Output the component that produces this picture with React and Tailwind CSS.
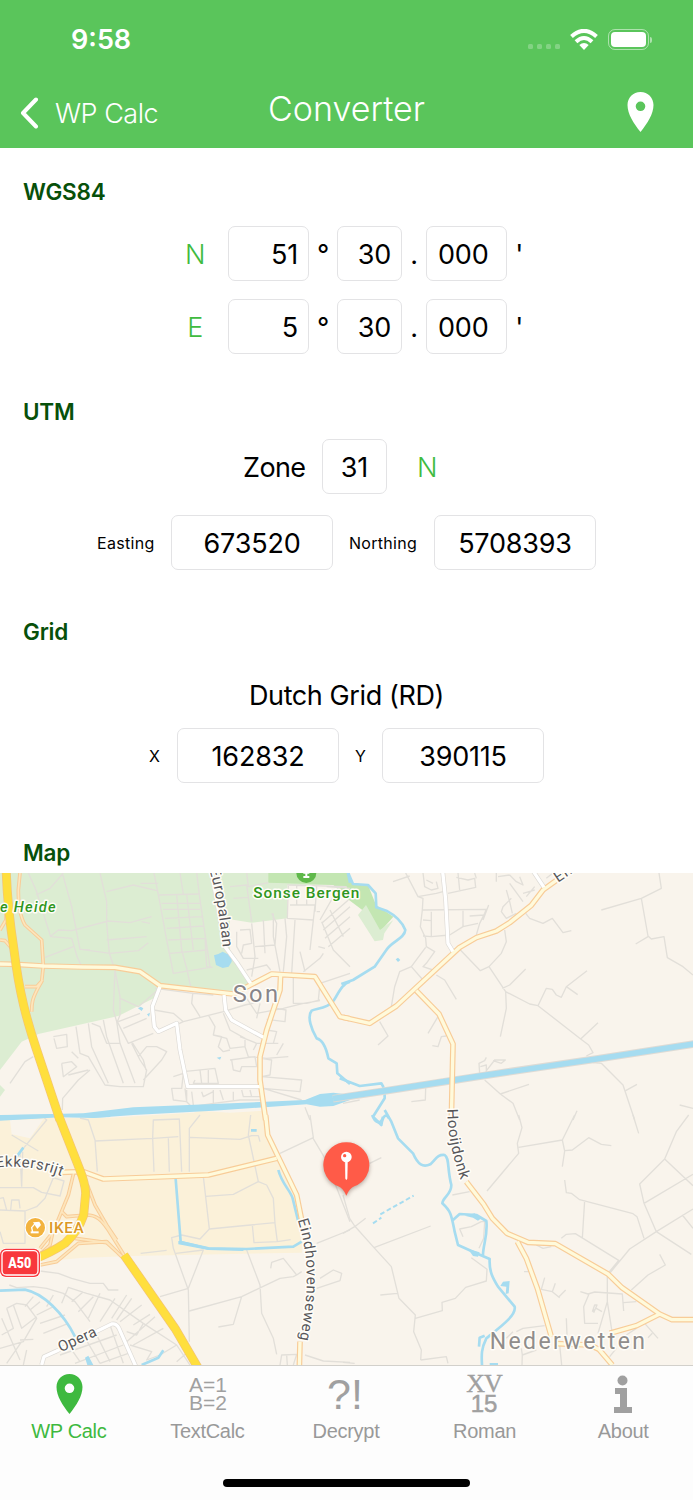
const SHEETS = {
  nw: 'translate(0 0)',
  ne: 'translate(1029 0)',
  sw: 'translate(0 735)',
  se: 'translate(1029 735)',
}

// Map geometry, split in four sheets, three units to the pixel
const STREETS = {
  nw: `M85 9L108 60L152 200L215 205L232 262L243 285M108 75L150 55L190 9M187 9L215 110L240 238L270 240M150 200L175 180L215 182L325 153L390 158L455 140M243 238L330 250L415 242L445 218M135 262L220 230M300 9L320 95L320 160L328 250L345 300L360 380L360 435L352 455
  M320 65L400 45L470 62M320 210L440 200M422 40L475 40M462 9L480 100L498 200L520 310L630 292L600 90L590 9M475 75L600 72M485 100L600 100M490 118L600 118M495 145L608 140M500 175L612 168M505 210L615 205M510 250L620 240M530 75L545 240L560 295L572 350M560 75L580 240M425 155L450 160M540 9L550 72M615 205L620 290L638 292M690 50L740 45L755 155M700 85L745 82M740 9L745 50L805 38
  M862 45L1040 50M865 45L862 145L940 150L945 105L870 105M890 45L890 105M920 45L920 105M950 50L945 125M950 125L960 125M980 50L1050 55M960 150L1000 80L1040 52M965 160L1045 90M970 180L1050 110M975 205L1050 140M985 230L1050 175M965 155L1000 240L1050 290M990 120L1030 200M955 230L975 235M910 305L960 265L970 250M820 130L820 200L840 305M855 145L860 200L850 305M885 150L875 310M940 150L930 240M900 245L915 305M755 160L765 260L755 320M790 150L795 250M720 180L750 178L755 220L730 225L725 250M710 185L710 230L730 265L775 265M765 230L825 225L830 160L815 130M740 300L800 285L812 300M955 390L960 340L1050 310M880 315L880 400L920 400L960 390M730 370L770 430L850 415L910 400L960 392M770 445L780 400M830 415L858 420L855 455L800 448
  M465 355L580 370L640 375M578 372L575 400L600 440M462 420L520 430L550 455L670 425L735 405L780 395M360 385L415 410L485 350M485 485L550 455M352 455L385 520L460 490M355 455L420 430M370 475L440 445M395 515L430 570L438 600M350 455L340 420L345 300M415 560L440 530L470 530L500 545L485 570L430 630
  M160 500L200 493L202 530L170 535L162 505M228 470L240 550L265 560L315 645L360 650L430 650L440 600L420 570L395 520M265 460L275 530L325 640M275 460L300 470L320 520L360 520M310 450L320 500L370 640M350 455L360 520L405 640M215 545L235 565M185 580L215 575L230 590L190 620L185 580M205 615L265 600M187 720L188 685L235 630L270 600M30 640L75 575L100 560
  M625 435L645 470L640 495L680 505L690 535L735 530L745 560L800 565L865 560M640 495L665 500L655 530L670 545L690 540M690 570L765 560L770 590L725 590L720 605L700 600L695 570M670 430L690 480L735 505L735 530M720 500L770 520L835 520M770 520L760 540M800 480L830 485L820 520M850 520L830 555M785 565L815 570L810 615L785 620M785 620L905 630L900 665L790 655M790 655L905 690M520 620L550 610L545 655L515 655L520 690L560 695L555 655M550 605L645 595L655 640L580 640L585 630M600 600L605 640M625 600L625 640M560 660L560 695L575 710L640 700L720 690L780 690M575 665L580 705M605 665L610 680L640 665M640 660L640 700M660 660L670 690M700 665L700 690M725 660L730 680L780 680M750 660L755 680M905 700L1050 680M915 712L930 750`,
  ne: `M150 35L200 18M188 9L225 80L240 85L238 120L232 170L248 205L250 230L275 245L250 280L240 290L270 300M240 120L430 118L425 130L410 160L400 195M225 80L280 70L300 65M240 9L245 50L265 60L285 55L280 35M250 30L270 40M315 70L398 52L395 25L375 30L340 22M345 9L350 60M395 9L400 25M265 125L265 200M240 150L265 152M240 198L265 200L320 195L360 170L405 160M360 120L360 170M380 138L425 135M437 105L420 150M248 232L205 290L170 305L155 350L145 410M205 290L240 330M280 315L305 330L340 388M110 455L135 498L105 525M285 440L255 490M268 527L285 530L295 500L310 498
  M460 9L460 35M465 20L500 15M500 15L520 35L540 45L530 20M500 40L540 95M540 70L575 60M490 60L500 95L508 130M505 85L480 110L475 125L490 145L520 130M610 25L630 9M585 20L600 50M575 50L550 80M548 130L560 145L600 160L628 145L660 188L685 182M485 180L490 215L475 250L438 290L412 302L350 238M438 290L488 365L490 415L472 500M478 355L500 345L548 297M488 365L560 402L585 407L610 355L628 358L640 375L655 382L670 350L732 302M670 350L704 374M585 407L713 507L737 525L750 548L730 558M713 507L765 458
  M775 120L895 85L955 55L948 9M895 85L915 198L925 207L963 200L973 263L1020 290L1050 315M878 222L915 200M410 610L408 580L425 572L430 562M428 605L455 570L487 570L475 580L450 572M412 590L430 585L430 605M750 578L775 580L840 645L875 750M848 662L882 643M425 630L472 672L510 700L530 750M472 672L558 643M248 655L247 690L205 695M0 700L50 690M690 750L702 722M1010 705L1050 715`,
  sw: `M35 60L115 108M70 100L140 15L125 0M60 115L65 215M0 218L100 218L125 232L180 243L192 198L160 188L135 250L110 275L75 288L0 285M0 250L10 248L20 285M32 285L35 255L57 255L60 280M75 288L75 385L10 385L0 350M65 215L68 110
  M240 9L265 15L285 75L292 170M285 78L458 70L460 15L538 12L545 170M458 70L462 170M505 70L508 170M460 70L535 65M568 170L568 40L600 0M570 67L720 73L755 62L775 62L780 80M752 0L745 60L775 200L800 210L820 250L825 325L832 380L872 374M775 200L700 238L618 244M610 185L628 342L600 372L545 360L515 368L520 400L565 525L568 680M628 342L720 333L825 323M757 330L762 383L832 380M422 415L500 406M528 415L610 405L565 520L480 545M740 405L780 510L785 595L820 670L830 718M568 588L725 545L840 490L880 485L890 480L850 430L815 442L812 460M725 545L700 628L655 636M840 115L940 68L930 0M938 68L975 130L1050 320M950 385L1050 345M890 480L905 470M950 520L1020 497L1025 475L1000 465L960 490
  M120 468L175 475L215 490L270 505L310 505L325 525L355 525M28 510L50 518L100 515L140 520L190 535L225 560L270 620M185 565L205 517L260 535L330 555L430 625L530 690L570 750M20 580L50 565L80 570L110 610L70 680L0 700M20 580L40 640L5 660M40 570L65 640L110 605M5 610L60 735M100 545L75 575M120 560L90 585M160 575L110 600M195 600L120 625M205 625L130 655M160 540L140 575M250 530L215 560M280 545L235 590M300 535L265 610M345 550L300 620M380 540L335 610M395 550L350 615M425 570L360 620M450 598L400 630M465 605L380 680M490 640L400 690M430 625L410 660L380 650M530 690L480 720L440 735L455 710L390 690M570 705L530 740M205 690L240 740M250 660L300 745M280 640L330 740M180 720L350 660M225 745L370 690M300 745L385 715M330 630L370 745M65 680L20 745M60 675L100 673M80 705L70 750M840 750L845 720L890 718L880 750M860 720L862 750M915 720L970 738L1050 742`,
  se: `M80 145L115 128M0 240L20 310L35 333L93 398L145 455L168 550L217 600L212 650L235 705L233 735M0 355L35 335L68 310M93 398L263 333M112 540L163 535M217 610L298 587L297 562L337 550L368 517L430 498L432 463L385 428M233 735L310 725L315 745M0 742L35 745M328 240L380 230M360 365L350 342L385 335L415 320L425 320L422 370L408 400
  M527 0L537 38L523 85L527 115L432 228M527 97L658 75L665 108L658 155M658 75L695 0M665 107L688 105L737 68L775 88L805 92M870 0L887 55M665 195L670 233L685 235L710 254L870 296L882 305L903 370M725 256L718 370M655 370L670 358L697 356L827 436L795 475M580 390L600 400L625 395M800 475L860 402L940 350L1050 282M940 350L903 265L890 207L965 132L1000 50L1037 0M965 132L1050 212M903 265L1050 178M1018 300L1050 340M940 350L1045 418M950 418L967 450L915 480L865 525M543 470L560 470M605 488L595 523L628 530L650 548M637 505L628 530M668 525L648 545M712 530L735 537L755 531L838 537L842 588M738 537L722 575L725 625L765 625M793 475L793 560L765 655M793 560L807 650M842 563L880 560M748 590L755 570L762 570L752 593M748 590L760 580L777 590M670 610L672 660M520 650L540 640L605 632M490 670L510 650M535 700L538 720L580 705M538 718L537 750M650 690L656 750M905 625L945 670M800 725L820 700M850 660L880 640M915 668L928 655`,
}

const WATER = {
  nw: 'M642 256L655 252L668 245L682 252L695 250L695 275L686 290L668 294L648 285ZM0 736L250 730L400 712L780 696L915 690L960 672L1000 668L1050 674L1050 690L1000 708L960 710L920 703L640 722L400 735L280 744L180 742L0 750ZM414 415L422 410L430 415L425 423ZM441 433L450 428L447 440ZM650 563L664 560L660 569Z',
  ne: 'M158 268L165 263L172 270L165 276Z',
  sw: 'M0 0L280 -4L335 -2L330 6L280 8L210 2L130 10L0 17ZM535 378L545 378L630 398L740 400L728 408L625 405L535 388ZM753 42L770 42L770 50L753 50ZM255 728L265 722L280 750L262 750Z',
  se: 'M365 302L395 295L415 310L405 317L390 308ZM375 402L410 412L405 425L390 423ZM472 513L480 500L500 498L497 535L488 537L490 515Z',
}

const HIGHWAY = {
  nw: 'M18 -20C20 80 28 150 42 240C58 370 80 450 110 540L180 750',
  sw: 'M175 0L238 160Q256 205 257 235L251 300Q235 348 195 385Q150 415 100 433M372 420L525 640L595 760',
}

const MAIN_ROADS = {
  nw: 'M0 282L48 283L130 288L245 291L345 292L420 305L480 347L700 372L815 312L945 320L1020 440L1050 446M842 312L840 360L800 480L780 560L780 630L797 750',
  ne: 'M0 442L80 460L160 408L350 232L400 203L460 183L500 158L565 106L600 60L690 -5M220 362L288 432L330 522L325 750',
  sw: 'M180 172L250 170L310 192L625 180L830 130M797 0L803 60L890 240L910 340M900 680L898 760',
  se: 'M370 200L422 268L448 310L492 355L555 382L637 386L795 477L837 518L950 597L987 614L1050 614M523 380L550 430L583 520L625 665M950 597L880 632L800 655M640 686L740 690L768 703L808 750',
}

const RAMPS = {
  nw: 'M60 9L55 60C55 110 60 140 75 165L125 210L130 288L125 335C95 385 95 400 95 425M0 180L18 150L18 100M0 210L15 212L35 235M75 350L110 350L128 330',
  sw: 'M222 170L205 240L160 350L120 400M185 290L200 305L260 300C290 300 305 315 325 345L372 420M262 210L285 270L320 330L350 375M225 370L320 383L372 430M120 450L170 440L235 385L320 380L365 425M160 345L150 390L118 420',
}

const WHITE_ROADS = {
  nw: 'M632 -10L675 230L712 280L755 345M480 350L457 410L463 470L475 485L530 460L540 540L563 650L780 650M672 375L677 420L695 450L790 502',
  ne: 'M298 -5L308 90L315 220L330 245M565 -5L603 52',
  sw: 'M125 750L132 725L170 708L335 627C345 625 352 630 357 640L410 760',
}

const CANAL = 'M-30 686L130 662L420 617L760 567L1070 519'

const STREAMS = {
  nw: 'M1050 335C1030 340 1020 360 1005 385C990 415 950 415 935 422C920 440 935 480 950 505C970 510 980 540 985 565L1010 580L1012 610L1050 642M1042 0L1050 38',
  ne: 'M-5 342L30 330L95 290L130 240C145 215 185 205 187 180C175 150 145 130 130 122L100 112L98 70L75 45L30 42L14 5M-10 625L50 648L115 640C125 655 125 665 125 685L90 740L115 765C120 735 130 730 138 745',
  sw: 'M527 192L542 380M545 382L625 400L740 402L880 395L905 380M835 165C845 205 870 225 878 250L895 320M70 98L50 125M0 527L75 524C130 535 190 595 225 665M425 750L475 728L490 706',
  se: 'M88 0C95 25 115 30 120 5M125 -15L145 20L165 70L210 115C225 150 240 158 262 148C280 130 285 118 305 120C320 130 312 160 325 210C325 240 300 245 298 265C325 290 325 300 335 350L345 390L400 415L440 432C438 470 450 490 465 515L515 575C520 600 480 630 430 670C415 700 415 720 417 750M330 315L350 297L400 300L430 318C435 360 420 390 420 420M425 662L410 668L408 695M440 748L465 748',
}

const WAYPOINT_ROWS = [
  { direction: 'N', degrees: '51' },
  { direction: 'E', degrees: '5' },
]

function Layer({ paths, stroke, width }) {
  return (
    <g fill="none" stroke={stroke} strokeWidth={width} strokeLinejoin="round">
      {Object.entries(paths).map(([sheet, d]) => (
        <path key={sheet} d={d} transform={SHEETS[sheet]} />
      ))}
    </g>
  )
}

function PathLabel({ id, d, sheet, size = 45, length, children }) {
  return (
    <g transform={SHEETS[sheet]}>
      <path id={id} d={d} fill="none" />
      <text fontSize={size} textLength={length} fill="#57575a" stroke="#fffdf8" strokeWidth="9" strokeLinejoin="round" paintOrder="stroke">
        <textPath href={`#${id}`} textLength={length}>{children}</textPath>
      </text>
    </g>
  )
}

function PlaceLabel({ x, y, size, color, children, ...rest }) {
  return (
    <text x={x} y={y} fontSize={size} fill={color} stroke="#fffdf8" strokeWidth="9" strokeLinejoin="round" paintOrder="stroke" {...rest}>
      {children}
    </text>
  )
}

function MapView() {
  return (
    <svg viewBox="0 9 2079 1476" className="block h-[492px] w-full font-['Roboto',sans-serif]">
      <rect y="9" width="2079" height="1476" fill="#f9f4ec" />
      <path d="M0 9H1050V45L862 45V145L755 158L690 148L690 240L755 345L700 370L480 347L470 380L355 438L115 492L65 515L0 600Z" fill="#dcedd2" />
      <path d="M0 645L15 660L0 680Z" fill="#dcedd2" />
      <path d="M805 9H1045L1060 40L1104 45L1128 105L1180 140L1140 185L1100 130L1040 85L1000 45L862 40L805 38Z" fill="#c3e6b2" />
      <path d="M1074 135L1098 105L1140 180L1180 150L1153 190L1149 210L1124 214Z" fill="#dcedd2" />
      <path d="M0 745L330 743L580 728L600 723L690 728L797 722L803 795L890 975L910 1120L905 1148L400 1158L250 1163L120 1175L0 1165Z" fill="#fbf1d9" />
      <path d="M30 750L130 748L90 805L35 793Z" fill="#f9f4ec" />
      <Layer paths={STREETS} stroke="#e2dfd9" width="4" />
      {Object.entries(WATER).map(([sheet, d]) => (
        <path key={sheet} d={d} transform={SHEETS[sheet]} fill="#a6dcf0" />
      ))}
      <Layer paths={STREAMS} stroke="#a6dcf0" width="8" />
      <path d={CANAL} transform={SHEETS.ne} fill="none" stroke="#dedbd5" strokeWidth="23" />
      <path d={CANAL} transform={SHEETS.ne} fill="none" stroke="#a6dcf0" strokeWidth="17" />
      <path d="M90 325L115 308M112 298L212 242" transform={SHEETS.se} fill="none" stroke="#a6dcf0" strokeWidth="6" strokeDasharray="14 8" />
      <Layer paths={WHITE_ROADS} stroke="#dedbd6" width="14" />
      <Layer paths={RAMPS} stroke="#f8cc98" width="11" />
      <Layer paths={MAIN_ROADS} stroke="#f8cc98" width="17" />
      <Layer paths={WHITE_ROADS} stroke="#ffffff" width="10" />
      <Layer paths={RAMPS} stroke="#fde6bd" width="5" />
      <Layer paths={MAIN_ROADS} stroke="#fffadb" width="10" />
      <Layer paths={HIGHWAY} stroke="#f3c478" width="27" />
      <Layer paths={HIGHWAY} stroke="#ffdf3d" width="23" />

      <PathLabel id="europalaan" sheet="nw" d="M628 -2Q660 110 672 280" length="238">Europalaan</PathLabel>
      <PathLabel id="en" sheet="ne" d="M645 38L740 -25" length="54">En</PathLabel>
      <PathLabel id="hooijdonk" sheet="ne" d="M313 717C315 810 328 860 368 975" length="218">Hooijdonk</PathLabel>
      <PathLabel id="eindhovenseweg" sheet="sw" d="M893 315C932 440 928 540 888 730" length="364">Eindhovenseweg</PathLabel>
      <PathLabel id="ekkersrijt" sheet="sw" d="M-12 158Q95 145 200 190" length="200">Ekkersrijt</PathLabel>
      <PathLabel id="opera" sheet="sw" d="M182 712L320 649" length="122">Opera</PathLabel>

      <circle cx="919" cy="9" r="30" fill="#5fb94a" />
      <path d="M919 -5V23M910 21H928M910 8H928" stroke="#fff" strokeWidth="6" />
      <PlaceLabel x="760" y="84" size={46} color="#2f9620" fontWeight="500" textLength="318">Sonse Bergen</PlaceLabel>
      <PlaceLabel x="0" y="126" size={44} color="#2f9620" fontWeight="500" fontStyle="italic" textLength="167">e Heide</PlaceLabel>
      <PlaceLabel x="698" y="396" size={71} color="#87858a" textLength="136">Son</PlaceLabel>
      <PlaceLabel x="1469" y="1437" size={69} color="#908d8b" textLength="466">Nederwetten</PlaceLabel>

      <circle cx="106" cy="1073" r="32" fill="#fff" />
      <circle cx="106" cy="1073" r="29" fill="#f3b33e" />
      <path d="M92 1087H116" stroke="#fff" strokeWidth="6" />
      <path d="M98 1086L95 1073L105 1061" fill="none" stroke="#fff" strokeWidth="4" />
      <path d="M99 1057L118 1055L123 1065L112 1077Z" fill="#fff" />
      <PlaceLabel x="147" y="1089" size={46} color="#dc9827" fontWeight="500" textLength="104">IKEA</PlaceLabel>

      <rect x="-2" y="1134" width="124" height="89" rx="20" fill="#fff" />
      <rect x="0" y="1136" width="120" height="85" rx="18" fill="#f8383d" />
      <rect x="6" y="1142" width="108" height="73" rx="13" fill="none" stroke="#fff" strokeWidth="4" />
      <text x="25" y="1194" fontSize="44" fontWeight="900" fill="#fff" textLength="69" lengthAdjust="spacingAndGlyphs">A50</text>

      <g className="drop-shadow-[0_5px_6px_rgba(80,50,40,0.4)]">
        <path d="M1039 817A68 68 0 0 0 1015 949Q1029 954 1039 977Q1049 954 1063 949A68 68 0 0 0 1039 817Z" fill="#ff5b48" />
      </g>
      <circle cx="1039" cy="861" r="16" fill="#fff" />
      <circle cx="1034" cy="857" r="5" fill="#ff5b48" />
      <path d="M1036 875H1042L1041 925L1039 929L1037 925Z" fill="#fff" stroke="#fff" strokeWidth="2" />
    </svg>
  )
}

function PinIcon({ className }) {
  return (
    <svg viewBox="0 0 26 40" className={className} fill="currentColor">
      <path fillRule="evenodd" d="M13 0C5.500 0 0 5.700 0 13.100C0 22 6 31.500 13 40C20 31.500 26 22 26 13.100C26 5.700 20.500 0 13 0ZM13 9.500A4.800 4.800 0 1 1 13 19.100A4.800 4.800 0 1 1 13 9.500Z" />
    </svg>
  )
}

function StatusBar() {
  return (
    <div className="flex h-20 items-center pl-[71px] pr-[44px]">
      <span className="pt-px text-[27px] font-semibold">9:58</span>
      <div className="ml-auto flex items-center pb-px">
        <div className="mr-[10px] mt-[14px] flex gap-[3.500px] text-white/25">
          {[0, 1, 2, 3].map((dot) => (
            <span key={dot} className="h-[5px] w-[5.500px] rounded-[1.500px] bg-current" />
          ))}
        </div>
        <svg viewBox="0 0 28 21" className="mr-[10px] h-[21px] w-7" fill="none" stroke="currentColor" strokeWidth="4">
          <path d="M1.500 7.500Q14 -3.800 26.500 7.500M6 12.700Q14 5.300 22 12.700" />
          <path d="M14 21L9.300 15.900Q14 12 18.700 15.900Z" fill="currentColor" stroke="none" />
        </svg>
        <div className="h-[21px] w-[41px] rounded-[7px] border border-white/50 p-[2px]">
          <div className="h-full rounded-[4px] bg-white" />
        </div>
        <div className="-mr-[3px] ml-[1px] h-[6px] w-[2px] rounded-r-full bg-white/50" />
      </div>
    </div>
  )
}

function NavBar() {
  return (
    <div className="flex h-[68px] items-start">
      <div className="flex w-[230px] items-center pl-5 pt-[15px]">
        <svg viewBox="0 0 19 32" className="mr-[15px] h-8 w-[19px]" fill="none" stroke="currentColor" strokeWidth="4" strokeLinecap="round" strokeLinejoin="round">
          <path d="M16 2.500L3 16L16 29.500" />
        </svg>
        <span className="whitespace-nowrap pl-px pt-[2px] text-[27px] font-light leading-[34px] tracking-[-0.5px]">WP Calc</span>
      </div>
      <h1 className="flex-1 pt-2 text-center text-[34px] font-light leading-[42px]">Converter</h1>
      <div className="flex w-[230px] justify-end pr-[39px] pt-3">
        <PinIcon className="h-10 w-[27px]" />
      </div>
    </div>
  )
}

function SectionTitle({ className = '', children }) {
  return <h2 className={`pl-[23px] text-[22.500px] font-semibold leading-7 tracking-[-0.2px] text-[#07500a] ${className}`}>{children}</h2>
}

function Field({ className, value }) {
  return (
    <div className={`flex h-[55px] shrink-0 items-center rounded-[7px] border border-[#e3e3e5] pt-[3px] tracking-[-0.2px] ${className}`}>
      {value}
    </div>
  )
}

function FieldLabel({ className, children }) {
  return <span className={`shrink-0 whitespace-nowrap text-[16px] tracking-[0.3px] ${className}`}>{children}</span>
}

const TABS = [
  { label: 'WP Calc', icon: <PinIcon className="h-10 w-[27px]" />, active: true },
  {
    label: 'TextCalc',
    icon: (
      <span className="flex flex-col text-[21px] leading-[18px]">
        <span>A=1</span>
        <span>B=2</span>
      </span>
    ),
  },
  { label: 'Decrypt', icon: <span className="pr-[3px] text-[43px] leading-10">?!</span> },
  {
    label: 'Roman',
    icon: (
      <span className="pr-[2px] text-center text-[24px]">
        <span className="block font-['Liberation_Serif',serif] text-[26px] leading-[19px] tracking-[-1px] [-webkit-text-stroke:0.4px]">XV</span>
        <span className="block leading-[21px] [-webkit-text-stroke:0.5px]">15</span>
      </span>
    ),
  },
  {
    label: 'About',
    icon: (
      <svg viewBox="0 0 18 38" className="mr-[2px] h-[38px] w-[18px]" fill="currentColor">
        <circle cx="8.500" cy="5.500" r="5" />
        <path d="M1 13H13V32H18V38H0V32H6V19H1Z" />
      </svg>
    ),
  },
]

function TabBar() {
  return (
    <nav className="h-[135px] border-t border-[#d2d0cb] bg-[#fdfdfd] pt-2 font-['Liberation_Sans',Arial,sans-serif]">
      <div className="grid grid-cols-5">
        {TABS.map((tab) => (
          <div key={tab.label} className={`flex flex-col items-center ${tab.active ? 'text-[#3eb93f]' : 'text-[#a0a0a0]'}`}>
            <div className="flex h-10 items-center">{tab.icon}</div>
            <span className={`mt-[3px] pr-px text-[20px] leading-7 tracking-[-0.3px] ${tab.active ? '' : 'text-[#999999]'}`}>{tab.label}</span>
          </div>
        ))}
      </div>
      <div className="mx-auto mt-[34px] h-[8px] w-[247px] rounded-full bg-black" />
    </nav>
  )
}

export default function App() {
  return (
    <div className="h-[1500px] w-[693px] overflow-hidden bg-white font-['Inter',sans-serif] text-black">
      <header className="h-[148px] bg-[#5ac55b] text-white">
        <StatusBar />
        <NavBar />
      </header>

      <main className="h-[725px] pt-[30px] text-[27px] tracking-[-0.4px]">
        <SectionTitle>WGS84</SectionTitle>
        <div className="mt-5 flex flex-col gap-[18px]">
          {WAYPOINT_ROWS.map((row) => (
            <div key={row.direction} className="flex items-center pl-[175px]">
              <span className="mr-[13px] w-10 pt-[3px] text-center font-light text-[#3fbb3f]">{row.direction}</span>
              <Field className="w-[81px] justify-end pr-[10px]" value={row.degrees} />
              <span className="w-7 pt-[3px] text-center">°</span>
              <Field className="w-[65px] justify-end pr-[10px]" value="30" />
              <span className="w-6 pt-[3px] text-center">.</span>
              <Field className="w-[81px] pl-[11px]" value="000" />
              <span className="w-6 pt-[3px] text-center">'</span>
            </div>
          ))}
        </div>

        <SectionTitle className="mt-[44px]">UTM</SectionTitle>
        <div className="mt-[13px] flex items-center pl-[243px]">
          <span className="w-[79px] pt-[3px] tracking-[-0.6px]">Zone</span>
          <Field className="w-[65px] justify-center" value="31" />
          <span className="ml-5 w-10 pt-[3px] text-center font-light text-[#3fbb3f]">N</span>
        </div>
        <div className="mt-[21px] flex items-center pl-[97px]">
          <FieldLabel className="w-[74px]">Easting</FieldLabel>
          <Field className="w-[162px] justify-center" value="673520" />
          <FieldLabel className="w-[101px] pl-4">Northing</FieldLabel>
          <Field className="w-[162px] justify-center" value="5708393" />
        </div>

        <SectionTitle className="mt-[48px]">Grid</SectionTitle>
        <div className="mt-9 text-center leading-7">Dutch Grid (RD)</div>
        <div className="mt-[18px] flex items-center pl-[149px]">
          <FieldLabel className="w-[28px]">X</FieldLabel>
          <Field className="w-[162px] justify-center" value="162832" />
          <FieldLabel className="w-[43px] pl-4">Y</FieldLabel>
          <Field className="w-[162px] justify-center" value="390115" />
        </div>

        <SectionTitle className="mt-[56px]">Map</SectionTitle>
      </main>

      <MapView />
      <TabBar />
    </div>
  )
}
